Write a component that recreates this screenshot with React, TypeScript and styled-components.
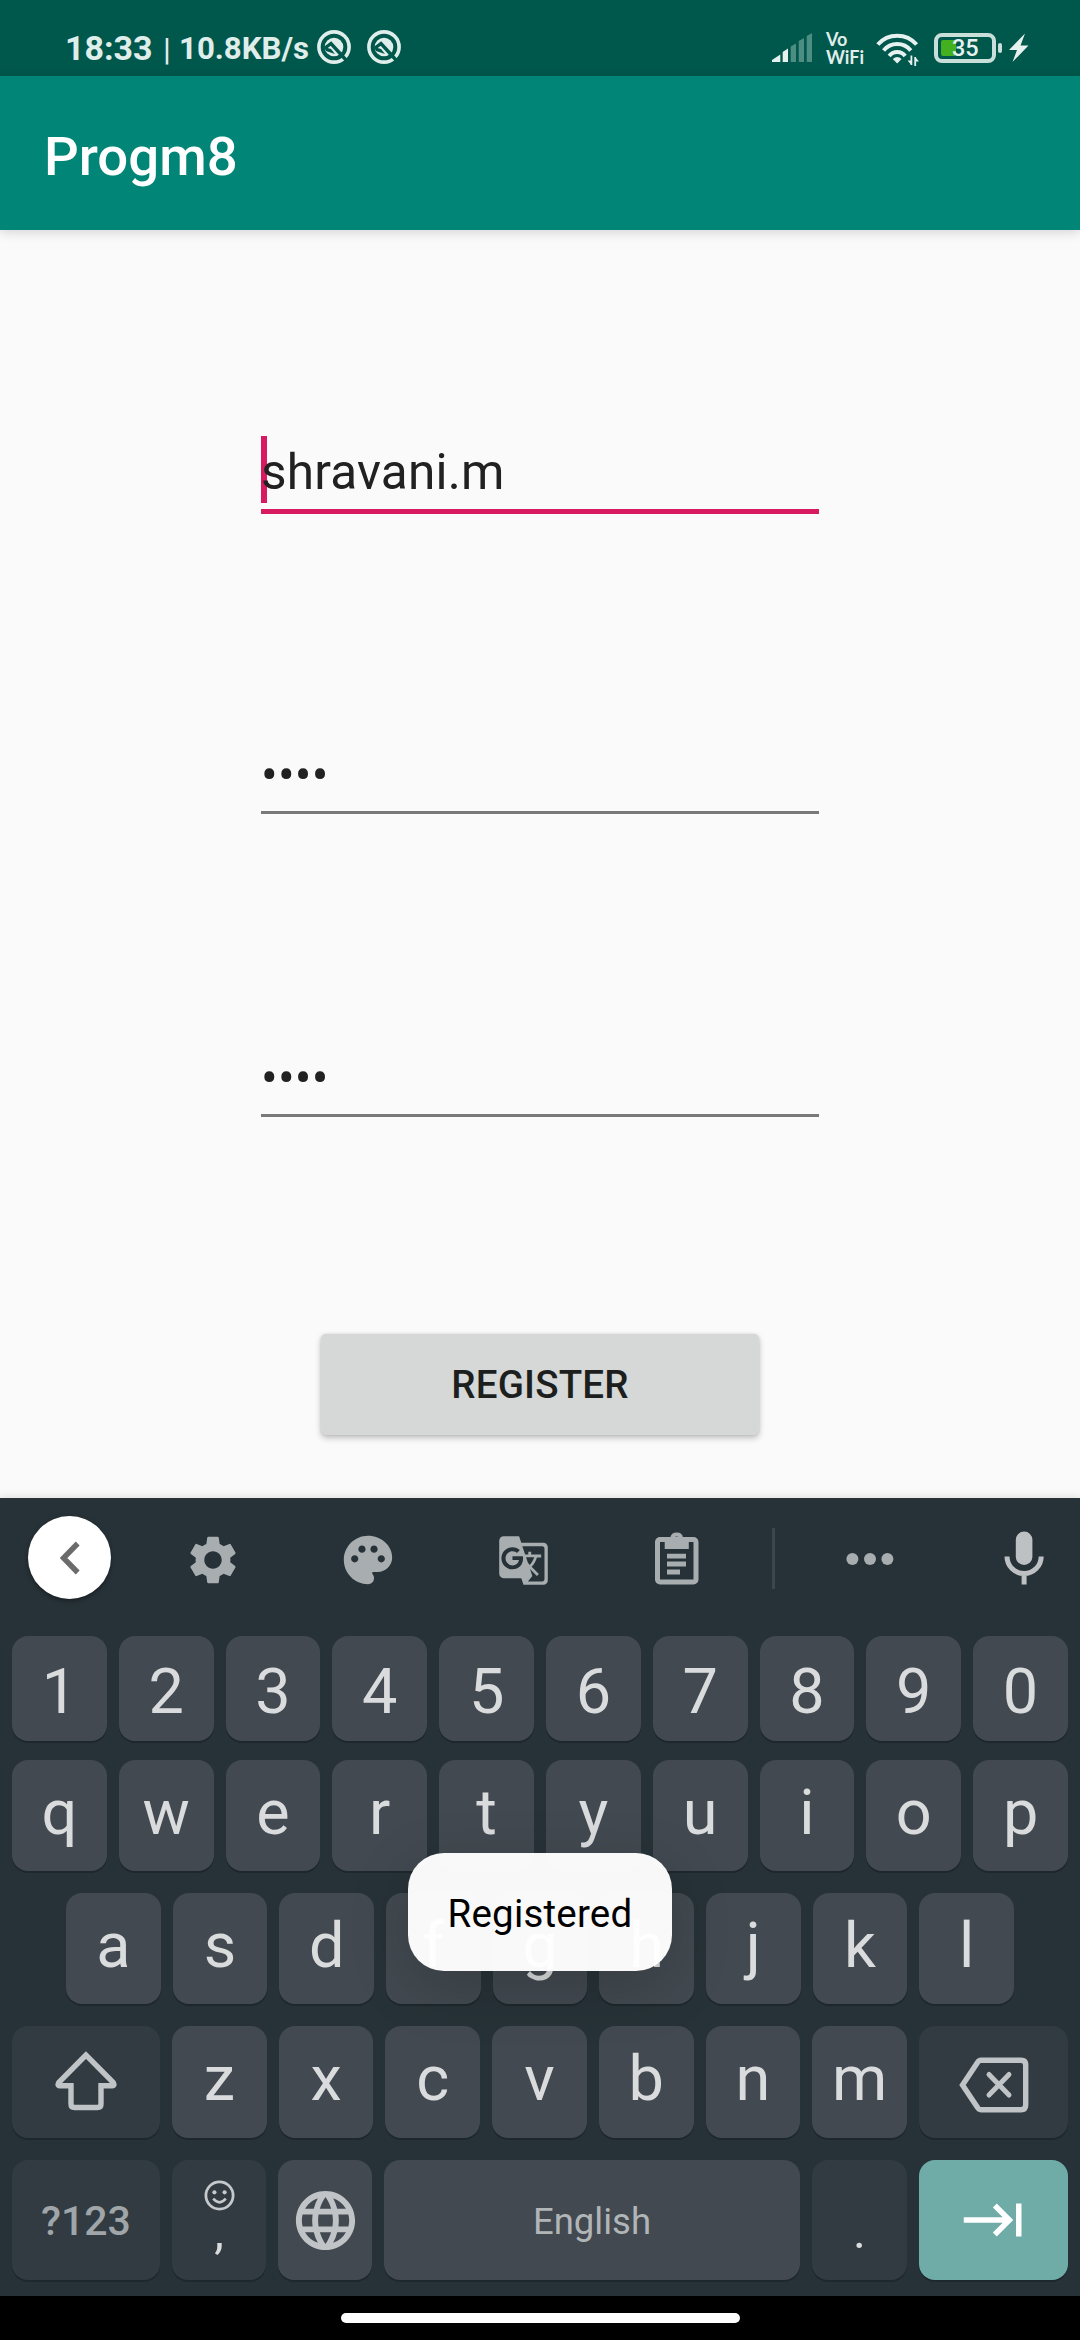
import React from "react";
import styled, { createGlobalStyle } from "styled-components";
import {
  MdGTranslate,
  MdKeyboardTab,
  MdLanguage,
  MdPalette,
  MdSettings,
} from "react-icons/md";

const GlobalStyle = createGlobalStyle`
  * { box-sizing: border-box; }
  body { margin: 0; background: #fafafa; font-family: Roboto, "Noto Sans", sans-serif; }
  svg { display: block; flex: none; }
`;

const Screen = styled.div`
  width: 1080px;
  height: 2340px;
  display: flex;
  flex-direction: column;
  position: relative;
  overflow: hidden;
  background: #fafafa;
`;

/* ---------- status bar ---------- */

const StatusBar = styled.div`
  height: 76px;
  flex: none;
  display: flex;
  justify-content: space-between;
  background: #00574b;
  color: #e0eeeb;
  padding: 0 51px 0 65px;
`;

const StatusGroup = styled.div`
  display: flex;
  align-items: flex-start;
`;

const StatusText = styled.span<{ $size: number; $top: number; $width: number; $weight?: number }>`
  margin-top: ${(p) => p.$top}px;
  width: ${(p) => p.$width}px;
  font-size: ${(p) => p.$size}px;
  font-weight: ${(p) => p.$weight ?? 700};
  line-height: 40px;
  white-space: nowrap;
`;

const StatusIcon = styled.span<{ $top: number; $right?: number }>`
  margin-top: ${(p) => p.$top}px;
  margin-right: ${(p) => p.$right ?? 0}px;
`;

const VoWifi = styled.div`
  width: 38px;
  margin: 30px 12px 0 0;
  font: 700 18px/18px Lato, sans-serif;
  white-space: nowrap;
`;

const Battery = styled.div`
  width: 62px;
  height: 30px;
  margin-top: 33px;
  border: 4px solid #c8dfda;
  border-radius: 8px;
  padding: 3px;
  display: flex;
  align-items: center;
`;

const BatteryCharge = styled.div`
  width: 15px;
  height: 16px;
  flex: none;
  border-radius: 2px;
  background: #43b01f;
`;

const BatteryLevel = styled.span`
  margin-left: -4px;
  font-size: 23.5px;
  font-weight: 500;
  line-height: 22px;
  color: #e6f2f0;
`;

const BatteryTip = styled.div`
  width: 4px;
  height: 10px;
  margin: 43px 7px 0 2px;
  border-radius: 2px;
  background: #c8dfda;
`;

/* ---------- app ---------- */

const AppBar = styled.header`
  height: 154px;
  flex: none;
  padding-left: 44px;
  background: #008577;
  color: #fff;
  font-size: 54.5px;
  font-weight: 500;
  line-height: 160px;
  box-shadow: 0 3px 10px rgba(0, 0, 0, 0.14);
`;

const Form = styled.main`
  height: 1268px;
  flex: none;
  display: flex;
  flex-direction: column;
  align-items: center;
  padding-top: 206px;
`;

const Field = styled.div<{ $focused?: boolean }>`
  position: relative;
  width: 558px;
  height: 78px;
  margin-bottom: ${(p) => (p.$focused ? 222 : 225)}px;
  border-bottom: ${(p) => (p.$focused ? "5.5px solid #d81b60" : "3px solid #797979")};
  color: #212121;
  font-size: 49.5px;
  letter-spacing: 0.2px;
  line-height: ${(p) => (p.$focused ? 73 : 78)}px;
  white-space: nowrap;
`;

const Caret = styled.span`
  position: absolute;
  left: 0;
  top: 0;
  width: 6px;
  height: 67px;
  background: #d81b60;
`;

const FieldText = styled.span`
  position: relative;
`;

const RegisterButton = styled.button`
  width: 438px;
  height: 101px;
  margin-top: -8px;
  border: 0;
  padding: 0;
  border-radius: 5px;
  background: #d6d7d7;
  color: #1d1e1e;
  font: 500 38.5px/102px Roboto, sans-serif;
  letter-spacing: 0.2px;
  box-shadow: 0 3px 6px rgba(0, 0, 0, 0.24), 0 0 3px rgba(0, 0, 0, 0.1);
`;

/* ---------- keyboard ---------- */

const Keyboard = styled.section`
  height: 798px;
  flex: none;
  background: #273238;
  box-shadow: 0 -2px 8px rgba(0, 0, 0, 0.1);
`;

const Toolbar = styled.div`
  height: 138px;
  display: flex;
  color: #a8adb0;
`;

const ToolCell = styled.div<{ $width: number; $indent?: number; $height?: number }>`
  width: ${(p) => p.$width}px;
  height: ${(p) => p.$height ?? 124}px;
  padding-left: ${(p) => p.$indent ?? 0}px;
  flex: none;
  display: flex;
  align-items: center;
  justify-content: center;
`;

const BackCircle = styled.div`
  width: 83px;
  height: 83px;
  border-radius: 50%;
  background: #fff;
  display: flex;
  align-items: center;
  justify-content: center;
  box-shadow: 0 2px 5px rgba(0, 0, 0, 0.4);
`;

const Divider = styled.div`
  width: 3px;
  height: 61px;
  background: #3c464b;
`;

const KeyRow = styled.div<{ $height: number; $gap: number; $side?: number }>`
  height: ${(p) => p.$height}px;
  margin-bottom: ${(p) => p.$gap}px;
  padding: 0 ${(p) => p.$side ?? 12}px;
  display: flex;
  gap: 12px;
`;

type Tone = "letter" | "dim" | "accent";
const tones: Record<Tone, string> = {
  letter: "#424950",
  dim: "#313b41",
  accent: "#6faba7",
};

const Key = styled.div<{ $tone?: Tone; $width?: number; $lift?: number; $stack?: boolean }>`
  flex: ${(p) => (p.$width ? `0 0 ${p.$width}px` : "1 1 0")};
  min-width: 0;
  display: flex;
  flex-direction: column;
  align-items: center;
  justify-content: ${(p) => (p.$stack ? "flex-start" : "center")};
  padding-bottom: ${(p) => Math.max(0, p.$lift ?? 0)}px;
  padding-top: ${(p) => Math.max(0, -(p.$lift ?? 0))}px;
  border-radius: 16px;
  background: ${(p) => tones[p.$tone ?? "letter"]};
  color: #d9dbdd;
  font-size: 63px;
  line-height: 74px;
  box-shadow: 0 2px 0 #1e272d;
`;

const ModeLabel = styled.span`
  font-size: 41px;
  font-weight: 500;
  line-height: 48px;
  color: #9fa5a8;
`;

const SpaceLabel = styled.span`
  font-size: 36.5px;
  line-height: 44px;
  color: #b1b5b8;
`;

const Mark = styled.div<{ $top: number }>`
  margin-top: ${(p) => p.$top}px;
  font-size: 49px;
  line-height: 40px;
`;

const SmileSlot = styled.div`
  margin-top: 20px;
`;

const NavBar = styled.div`
  height: 44px;
  flex: none;
  display: flex;
  justify-content: center;
  padding-top: 17px;
  background: #000;
`;

const NavPill = styled.div`
  width: 399px;
  height: 10px;
  border-radius: 5px;
  background: #fff;
`;

const Toast = styled.div`
  position: absolute;
  left: 408px;
  top: 1853px;
  width: 264px;
  height: 118px;
  border-radius: 36px;
  background: rgba(255, 255, 255, 0.97);
  color: #000;
  font-size: 38.5px;
  letter-spacing: 0.2px;
  line-height: 121px;
  text-align: center;
  box-shadow: 0 16px 60px rgba(0, 0, 0, 0.18);
`;

/* ---------- drawings ---------- */

const DebugIcon = () => (
  <svg width="34" height="34" viewBox="0 0 34 34" fill="none">
    <circle cx="17" cy="17" r="15.1" stroke="#e0eeeb" strokeWidth="3.6" />
    <circle cx="17" cy="17" r="9.3" fill="#e0eeeb" />
    <path d="M8 18L14 13.5L29 30" stroke="#00574b" strokeWidth="3.4" />
    <path d="M7 17L14 19L18 24L9 21Z" fill="#00574b" />
  </svg>
);

const SignalIcon = () => (
  <svg width="41" height="30" viewBox="0 0 41 30">
    <g fill="#e6f2f0">
      <path d="M0 29V27L8.3 21.5V29Z" />
      <path d="M10.7 29V19L16 15.5V29Z" />
    </g>
    <g fill="#4d8d82">
      <path d="M18.7 29V13.6L24 10.5V29Z" />
      <path d="M26.7 29V8L32 5V29Z" />
      <path d="M34.7 29V3L40 0V29Z" />
    </g>
  </svg>
);

const WifiIcon = () => (
  <svg width="44" height="34" viewBox="0 0 44 34" fill="none">
    <g stroke="#e6f2f0" strokeWidth="4">
      <path d="M1.8 11.5A25.8 25.8 0 0 1 40.6 11.5" />
      <path d="M7.6 17.4A17.6 17.6 0 0 1 34.8 17.4" />
      <path d="M13.2 23A10 10 0 0 1 29.2 23" />
    </g>
    <path d="M16.8 26Q21.2 22 25.6 26L21.2 30.5Z" fill="#e6f2f0" />
    <path d="M35.4 22.5V32M39.2 24V33" stroke="#e6f2f0" strokeWidth="1.8" />
    <path d="M31.5 27.5H35.4V32ZM43 28.5H39.2V24Z" fill="#e6f2f0" />
  </svg>
);

const BoltIcon = () => (
  <svg width="20" height="30" viewBox="0 0 20 30">
    <path d="M16 0.5L0 17H8L3.5 29L19.5 12.5H11.5Z" fill="#e6f2f0" />
  </svg>
);

const ChevronIcon = () => (
  <svg width="20" height="34" viewBox="0 0 20 34" fill="none">
    <path d="M17.7 2.5L3.5 17L17.7 31.5" stroke="#6b6b6b" strokeWidth="5.4" />
  </svg>
);

const ClipboardIcon = () => (
  <svg width="44" height="53" viewBox="0 0 44 53">
    <rect x="2.5" y="7.5" width="38.5" height="42.5" rx="2.5" fill="none" stroke="currentColor" strokeWidth="5" />
    <path
      fill="currentColor"
      fillRule="evenodd"
      d="M9.7 6H15.2A6.6 6.6 0 0 1 28.2 6H33.8V17H9.7ZM21.7 4.6A2.7 2.7 0 1 0 21.7 10A2.7 2.7 0 1 0 21.7 4.6Z"
    />
    <path d="M12 24.2H31M12 32H31M12 40H25" stroke="currentColor" strokeWidth="4.8" />
  </svg>
);

const MoreIcon = () => (
  <svg width="48" height="14" viewBox="0 0 48 14" fill="currentColor">
    <circle cx="6.4" cy="7" r="6" />
    <circle cx="24" cy="7" r="6" />
    <circle cx="41.4" cy="7" r="6" />
  </svg>
);

const MicIcon = () => (
  <svg width="40" height="54" viewBox="0 0 40 54">
    <rect x="11.8" y="0.5" width="16.6" height="33.5" rx="8.3" fill="#bdc1c4" />
    <path d="M3 25.5A17.1 17.1 0 0 0 37.2 25.5M20.1 42V53.5" fill="none" stroke="#bdc1c4" strokeWidth="5" />
  </svg>
);

const ShiftIcon = () => (
  <svg width="62" height="60" viewBox="0 0 62 60" fill="none">
    <path
      d="M31 4L4.2 31Q1.5 34.5 5 34.8H16V53Q16 56.5 19.5 56.5H42.5Q46 56.5 46 53V34.8H57Q60.5 34.5 57.8 31Z"
      stroke="#c0c4c6"
      strokeWidth="5.4"
    />
  </svg>
);

const DeleteIcon = () => (
  <svg width="70" height="56" viewBox="0 0 70 56" fill="none" stroke="#c0c4c6">
    <path
      d="M22 3.3H62Q66.7 3.3 66.7 8V48Q66.7 52.7 62 52.7H22Q19.8 52.7 18.5 50.5L3.5 28L18.5 5.5Q19.8 3.3 22 3.3Z"
      strokeWidth="5.4"
    />
    <path d="M30 17.5L50 38M50 17.5L30 38" strokeWidth="5" strokeLinecap="round" />
  </svg>
);

const SmileIcon = () => (
  <svg width="31" height="31" viewBox="0 0 31 31" fill="none" stroke="#c5c9cb">
    <circle cx="15.5" cy="15.5" r="13.6" strokeWidth="2.8" />
    <path d="M9.2 18.7Q15.5 26 21.8 18.7" strokeWidth="2.6" />
    <circle cx="10.4" cy="12.3" r="2.1" fill="#c5c9cb" stroke="none" />
    <circle cx="20.6" cy="12.3" r="2.1" fill="#c5c9cb" stroke="none" />
  </svg>
);

const letters = (row: string, lift: number) =>
  row.split("").map((c) => (
    <Key key={c} $lift={lift}>
      {c}
    </Key>
  ));

export default function App() {
  return (
    <Screen>
      <GlobalStyle />
      <StatusBar>
        <StatusGroup>
          <StatusText $size={34} $top={28} $width={98}>18:33</StatusText>
          <StatusText $size={32} $top={29} $width={16} $weight={400}>|</StatusText>
          <StatusText $size={31.2} $top={29} $width={138}>10.8KB/s</StatusText>
          <StatusIcon $top={30} $right={16}><DebugIcon /></StatusIcon>
          <StatusIcon $top={30}><DebugIcon /></StatusIcon>
        </StatusGroup>
        <StatusGroup>
          <StatusIcon $top={33} $right={13}><SignalIcon /></StatusIcon>
          <VoWifi>
            <div>Vo</div>
            <div>WiFi</div>
          </VoWifi>
          <StatusIcon $top={33} $right={14}><WifiIcon /></StatusIcon>
          <Battery>
            <BatteryCharge />
            <BatteryLevel>35</BatteryLevel>
          </Battery>
          <BatteryTip />
          <StatusIcon $top={33}><BoltIcon /></StatusIcon>
        </StatusGroup>
      </StatusBar>

      <AppBar>Progm8</AppBar>

      <Form>
        <Field $focused>
          <Caret />
          <FieldText>shravani.m</FieldText>
        </Field>
        <Field><FieldText>••••</FieldText></Field>
        <Field><FieldText>••••</FieldText></Field>
        <RegisterButton>REGISTER</RegisterButton>
      </Form>

      <Keyboard>
        <Toolbar>
          <ToolCell $width={135} $indent={4} $height={119}>
            <BackCircle><ChevronIcon /></BackCircle>
          </ToolCell>
          <ToolCell $width={155}><MdSettings size={58} /></ToolCell>
          <ToolCell $width={155}><MdPalette size={58} /></ToolCell>
          <ToolCell $width={155} $indent={1}><MdGTranslate size={53} /></ToolCell>
          <ToolCell $width={154} $height={121}><ClipboardIcon /></ToolCell>
          <ToolCell $width={38} $height={121}><Divider /></ToolCell>
          <ToolCell $width={155} $height={122}><MoreIcon /></ToolCell>
          <ToolCell $width={133} $indent={21} $height={120}><MicIcon /></ToolCell>
        </Toolbar>
        <KeyRow $height={105} $gap={19}>{letters("1234567890", -6)}</KeyRow>
        <KeyRow $height={111} $gap={22}>{letters("qwertyuiop", 6)}</KeyRow>
        <KeyRow $height={111} $gap={22} $side={66}>{letters("asdfghjkl", 6)}</KeyRow>
        <KeyRow $height={112} $gap={22}>
          <Key $tone="dim" $width={148} $lift={2}><ShiftIcon /></Key>
          {letters("zxcvbnm", 7)}
          <Key $tone="dim" $width={149} $lift={-5}><DeleteIcon /></Key>
        </KeyRow>
        <KeyRow $height={120} $gap={16}>
          <Key $tone="dim" $width={148} $lift={-2}><ModeLabel>?123</ModeLabel></Key>
          <Key $tone="dim" $width={94} $stack>
            <SmileSlot><SmileIcon /></SmileSlot>
            <Mark $top={1}>,</Mark>
          </Key>
          <Key $width={94}><MdLanguage size={71} color="#c0c4c7" /></Key>
          <Key $lift={-4}><SpaceLabel>English</SpaceLabel></Key>
          <Key $tone="dim" $width={95} $stack>
            <Mark $top={52}>.</Mark>
          </Key>
          <Key $tone="accent" $width={149}><MdKeyboardTab size={66} color="#fff" /></Key>
        </KeyRow>
      </Keyboard>

      <NavBar><NavPill /></NavBar>
      <Toast>Registered</Toast>
    </Screen>
  );
}
